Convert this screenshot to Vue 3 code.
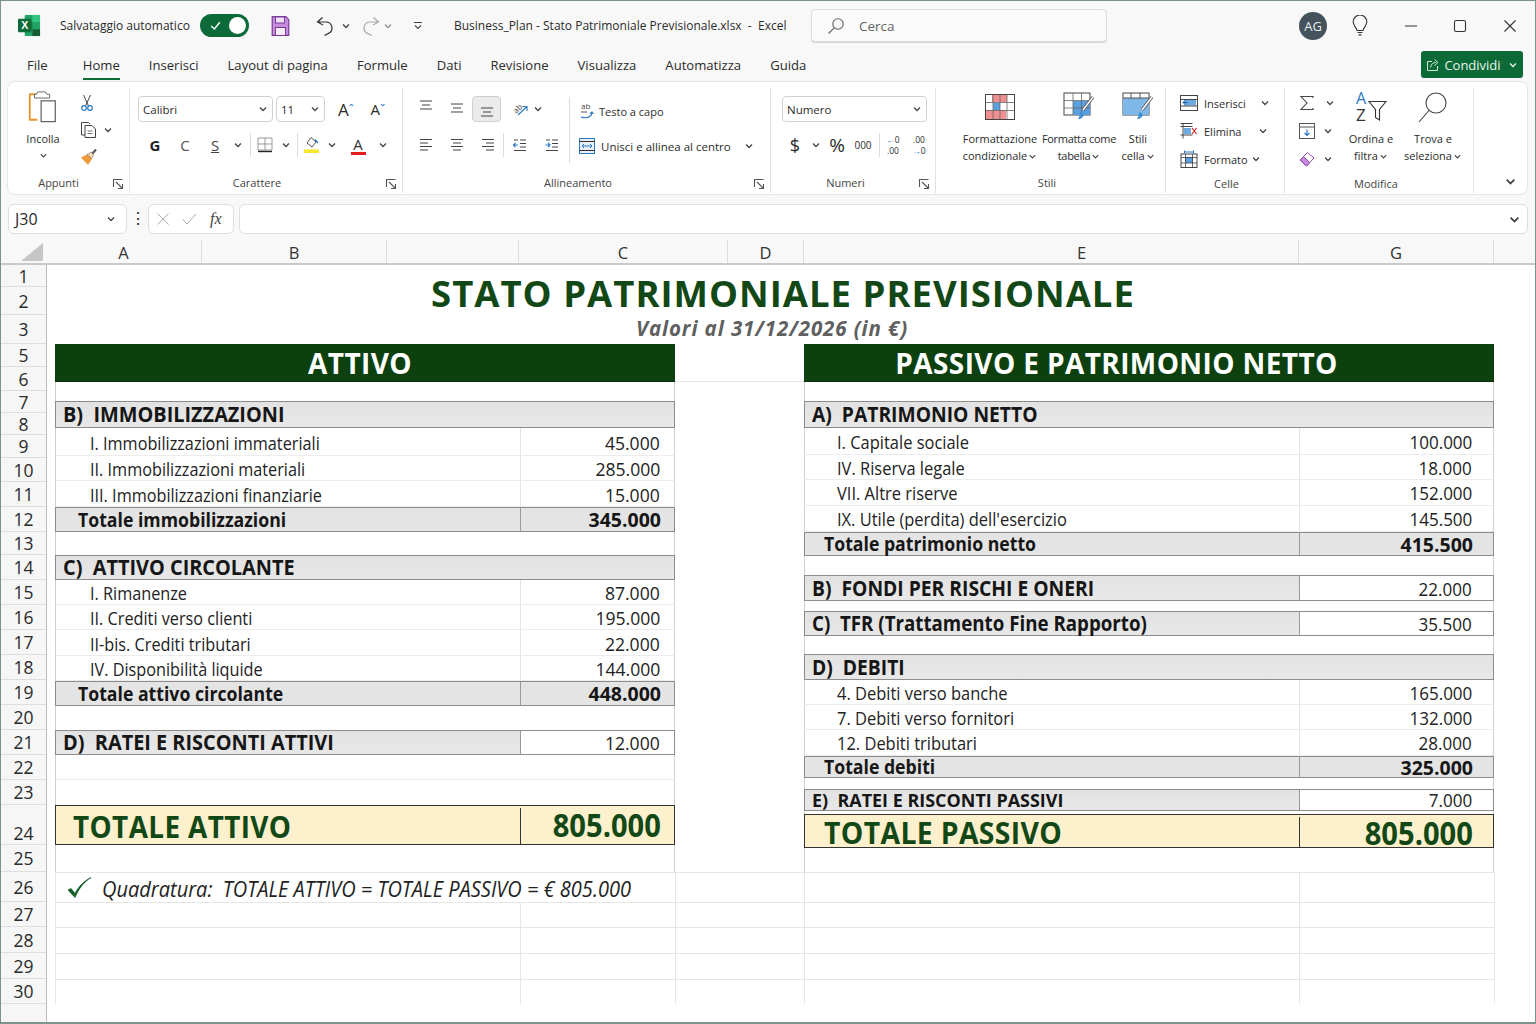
<template>
  <div class="app">
    <!-- icone ripetute -->
    <svg class="sprite" width="0" height="0">
      <symbol id="chev" viewBox="0 0 10 10"><path d="M2 3.5 5 6.5 8 3.5" fill="none" stroke="currentColor" stroke-width="1.3" /></symbol>
      <symbol id="launch" viewBox="0 0 12 12"><path d="M1.5 9V1.5H10.500M4 4l6 6M10.500 6v4.500H6" fill="none" stroke="#555" stroke-width="1.100" /></symbol>
      <symbol id="lines" viewBox="0 0 16 16"><path d="M2 3h12M4 7h8M2 11h12" fill="none" stroke="#444" stroke-width="1.100" /></symbol>
      <symbol id="left" viewBox="0 0 16 16"><path d="M2 2.500h12M2 6h8M2 9.500h12M2 13h8" fill="none" stroke="#444" stroke-width="1.100" /></symbol>
      <symbol id="center" viewBox="0 0 16 16"><path d="M2 2.500h12M4 6h8M2 9.500h12M4 13h8" fill="none" stroke="#444" stroke-width="1.100" /></symbol>
      <symbol id="right" viewBox="0 0 16 16"><path d="M2 2.500h12M6 6h8M2 9.500h12M6 13h8" fill="none" stroke="#444" stroke-width="1.100" /></symbol>
    </svg>

    <!-- barra del titolo -->
    <header class="titlebar">
      <svg class="logo" viewBox="0 0 24 24" width="23" height="23">
        <rect x="7" y="1" width="16" height="22" rx="1" fill="#21a366" />
        <rect x="15" y="1" width="8" height="7.500" fill="#33c481" />
        <rect x="7" y="8.500" width="8" height="7.500" fill="#107c41" />
        <rect x="15" y="16" width="8" height="7" fill="#185c37" />
        <rect x="0" y="5" width="14" height="14" rx="1" fill="#0f6b38" />
        <text x="7" y="16" text-anchor="middle" class="logo-x">X</text>
      </svg>
      <span class="autosave">Salvataggio automatico</span>
      <span class="toggle">
        <svg viewBox="0 0 12 12" width="13" height="13"><path d="M2 6.500 5 9.200 10 3" fill="none" stroke="#fff" stroke-width="1.300" /></svg>
        <i class="knob"></i>
      </span>
      <svg class="save" viewBox="0 0 18 20" width="19" height="20">
        <path d="M.7.7h13.600l3 3v15.600H.7z" fill="#c58bdc" stroke="#7a3c98" stroke-width="1.200" />
        <rect x="4" y="1" width="9" height="6" fill="#efe0f5" stroke="#7a3c98" />
        <rect x="4" y="11.500" width="10" height="8" fill="#f5ecf8" stroke="#7a3c98" />
      </svg>
      <svg class="undo" viewBox="0 0 18 20" width="18" height="20"><path d="M6.500 1.500 1.500 6l5.500 3M2 6h7.500a6 6 0 0 1 3 11.400L8.500 19.500" fill="none" stroke="#333" stroke-width="1.200" /></svg>
      <svg class="chev qa1"><use href="#chev" /></svg>
      <svg class="redo" viewBox="0 0 18 20" width="18" height="20"><path d="M11.500 1.500 16.500 6 11 9M16 6H8.500a6 6 0 0 0-3 11.400l4 2.100" fill="none" stroke="#a9a9a9" stroke-width="1.200" /></svg>
      <svg class="chev qa2"><use href="#chev" /></svg>
      <svg class="qat" viewBox="0 0 10 10" width="10" height="10"><path d="M1 1.500h8M2 4.500l3 3 3-3" fill="none" stroke="#444" stroke-width="1.100" /></svg>
      <span class="doc">Business_Plan - Stato Patrimoniale Previsionale.xlsx &nbsp;-&nbsp; Excel</span>
      <div class="search">
        <svg viewBox="0 0 18 18" width="18" height="18"><circle cx="11" cy="7" r="5.200" fill="none" stroke="#666" stroke-width="1.100" /><path d="M7.200 10.800 1.500 16.500" stroke="#666" stroke-width="1.100" /></svg>
        <span>Cerca</span>
      </div>
      <span class="avatar">AG</span>
      <svg class="bulb" viewBox="0 0 16 22" width="16" height="22"><path d="M5 15.500C4.500 12.500 1.200 11 1.200 6.800a6.800 6.800 0 0 1 13.600 0c0 4.200-3.300 5.700-3.800 8.700z" fill="none" stroke="#333" stroke-width="1.100" /><path d="M5.500 17.500h5M6.500 19.800h3" stroke="#333" stroke-width="1.200" /></svg>
      <svg class="win w-min" viewBox="0 0 14 14" width="14" height="14"><path d="M1 7h12" stroke="#333" /></svg>
      <svg class="win w-max" viewBox="0 0 14 14" width="14" height="14"><rect x="1.500" y="1.500" width="11" height="11" rx="1.500" fill="none" stroke="#333" stroke-width="1.100" /></svg>
      <svg class="win w-close" viewBox="0 0 14 14" width="14" height="14"><path d="M1.500 1.500l11 11M12.500 1.500l-11 11" stroke="#333" stroke-width="1.100" /></svg>
    </header>

    <!-- schede -->
    <nav class="tabs">
      <a v-for="t in tabs" :key="t" class="tab" :class="{ on: t === 'Home' }">{{ t }}</a>
      <button class="share">
        <svg viewBox="0 0 14 14" width="14" height="14"><path d="M6 3.500H1.500v9h10V8M4.500 9.500C5 6 7 4.500 10 4.500M8.500 1.500 12 4.500 8.500 7.500" fill="none" stroke="#cfe6d8" stroke-width="1" /></svg>
        <span>Condividi</span>
        <svg class="chev"><use href="#chev" /></svg>
      </button>
    </nav>

    <!-- barra multifunzione -->
    <section class="ribbon">
      <div class="grp g-app">
        <div class="grp-body">
          <div class="big paste">
            <svg viewBox="0 0 32 36" width="32" height="36">
              <path d="M12 4.500H2v27h8" fill="none" stroke="#e8952f" stroke-width="2" />
              <path d="M9 4.500l1.500-2.500h8l1.500 2.500h3v4H7v-4z" fill="#fff" stroke="#666" />
              <rect x="14" y="11.500" width="15" height="22" fill="#fff" stroke="#555" stroke-width="1.200" />
            </svg>
            <span>Incolla</span>
            <svg class="chev"><use href="#chev" /></svg>
          </div>
          <div class="app-tools">
            <svg viewBox="0 0 14 18" width="14" height="18"><path d="M3.500 1 8.500 12M10.500 1 5.500 12" stroke="#444" fill="none" /><circle cx="4" cy="14" r="2.300" fill="none" stroke="#2b78c2" stroke-width="1.200" /><circle cx="10" cy="14" r="2.300" fill="none" stroke="#2b78c2" stroke-width="1.200" /></svg>
            <div class="tool-row">
              <svg viewBox="0 0 17 18" width="17" height="18"><path d="M5 14H1.500V1.500h7L10 3" fill="#fff" stroke="#444" /><path d="M5 4.500h7l3.500 3.500v8.500H5z" fill="#fff" stroke="#444" /><path d="M7.500 10h5M7.500 12.500h5" stroke="#777" /></svg>
              <svg class="chev"><use href="#chev" /></svg>
            </div>
            <svg viewBox="0 0 18 18" width="18" height="18"><path d="M1 9.500 8 6l4 5-4 6z" fill="#ee9a3a" /><path d="M7 6.500 11.500 4l2 3-2 3.500z" fill="#f7d9ae" stroke="#666" stroke-width=".6" /><path d="M12.500 5.500 16 1.500" stroke="#555" stroke-width="2" /></svg>
          </div>
        </div>
        <div class="grp-label">Appunti<svg class="launch"><use href="#launch" /></svg></div>
      </div>

      <div class="grp g-font">
        <div class="grp-body col">
          <div class="row">
            <div class="combo w135">Calibri<svg class="chev"><use href="#chev" /></svg></div>
            <div class="combo w49">11<svg class="chev"><use href="#chev" /></svg></div>
            <span class="cell w30 ml6 glyph">A<sup class="up">ˆ</sup></span>
            <span class="cell w30 ml2 glyph small-a">A<sup class="up">ˇ</sup></span>
          </div>
          <div class="row r2">
            <b class="cell w30 fmt">G</b>
            <span class="cell w30 fmt thin">C</span>
            <span class="cell w30 fmt under">S</span>
            <span class="cell w16"><svg class="chev"><use href="#chev" /></svg></span>
            <i class="sep ml4"></i>
            <span class="cell w28">
              <svg viewBox="0 0 16 16" width="16" height="16"><path d="M1 1h14v12H1zM8 1v12M1 7h14" fill="none" stroke="#999" /><path d="M1 14.500h14" stroke="#222" stroke-width="1.400" /></svg>
            </span>
            <span class="cell w14"><svg class="chev"><use href="#chev" /></svg></span>
            <i class="sep ml4"></i>
            <span class="cell w28">
              <svg viewBox="0 0 16 18" width="16" height="18"><path d="M3 7 7 1.500 12 6 8 11z" fill="#fff" stroke="#555" /><path d="M11 3.500 14 7" stroke="#2b78c2" stroke-width="1.400" /><rect y="13.500" width="15" height="3.500" fill="#f7e72a" /></svg>
            </span>
            <span class="cell w12"><svg class="chev"><use href="#chev" /></svg></span>
            <span class="cell w28 ml6 color-a">A<i></i></span>
            <span class="cell w16 ml3"><svg class="chev"><use href="#chev" /></svg></span>
          </div>
        </div>
        <div class="grp-label">Carattere<svg class="launch"><use href="#launch" /></svg></div>
      </div>

      <div class="grp g-align">
        <div class="grp-body">
          <div class="align-left">
            <div class="row">
              <span class="cell w31"><svg class="ic16 t-up"><use href="#lines" /></svg></span>
              <span class="cell w31"><svg class="ic16"><use href="#lines" /></svg></span>
              <span class="cell w29 pressed"><svg class="ic16 t-down"><use href="#lines" /></svg></span>
              <span class="cell w24 ml7">
                <svg class="free" viewBox="0 0 18 18" width="18" height="18"><text x="2" y="12" class="orient" transform="rotate(-45 6 9)">ab</text><path d="M7 15 15.500 7M11.500 6.500H16V11" fill="none" stroke="#2b78c2" stroke-width="1.100" /></svg>
              </span>
              <span class="cell w12"><svg class="chev"><use href="#chev" /></svg></span>
            </div>
            <div class="row r2">
              <span class="cell w31"><svg class="ic16"><use href="#left" /></svg></span>
              <span class="cell w31"><svg class="ic16"><use href="#center" /></svg></span>
              <span class="cell w31"><svg class="ic16"><use href="#right" /></svg></span>
              <i class="sep"></i>
              <span class="cell w32">
                <svg viewBox="0 0 16 16" width="16" height="16"><path d="M8 3h6M8 6.500h6M8 10h6M2 13.500h12M2 3h4" fill="none" stroke="#444" stroke-width="1.100" /><path d="M6 8H1.500M3.500 6 1.500 8l2 2" fill="none" stroke="#2b78c2" stroke-width="1.200" /></svg>
              </span>
              <span class="cell w31">
                <svg viewBox="0 0 16 16" width="16" height="16"><path d="M8 3h6M8 6.500h6M8 10h6M2 13.500h12M2 3h4" fill="none" stroke="#444" stroke-width="1.100" /><path d="M1.500 8H6M4 6l2 2-2 2" fill="none" stroke="#2b78c2" stroke-width="1.200" /></svg>
              </span>
            </div>
          </div>
          <i class="sep tall"></i>
          <div class="align-right">
            <div class="wrap-row">
              <svg class="free" viewBox="0 0 16 18" width="16" height="18"><text x="2" y="7" class="orient">ab</text><path d="M2 10h6" stroke="#555" /><path d="M2 15c5 2 11 0 11-5M11 11.500l2-1.500 1.500 2" fill="none" stroke="#2b78c2" stroke-width="1.100" /></svg>
              <span>Testo a capo</span>
            </div>
            <div class="merge-row">
              <svg viewBox="0 0 16 16" width="16" height="16"><rect x=".5" y=".5" width="15" height="15" fill="#e8f1fa" stroke="#2b78c2" /><path d="M0 3.500h16M0 12.500h16" stroke="#333" /><path d="M3 8h10M5 6 3 8l2 2M11 6l2 2-2 2" fill="none" stroke="#2b78c2" /></svg>
              <span>Unisci e allinea al centro</span>
              <svg class="chev"><use href="#chev" /></svg>
            </div>
          </div>
        </div>
        <div class="grp-label">Allineamento<svg class="launch"><use href="#launch" /></svg></div>
      </div>

      <div class="grp g-num">
        <div class="grp-body col">
          <div class="row"><div class="combo w145">Numero<svg class="chev"><use href="#chev" /></svg></div></div>
          <div class="row r2 num-row">
            <span class="cell w26 cur">$</span>
            <span class="cell w16"><svg class="chev"><use href="#chev" /></svg></span>
            <span class="cell w26 cur pct">%</span>
            <span class="cell w26 thou">000</span>
            <i class="sep ml3"></i>
            <span class="cell w26 dec"><span><b class="blue">←</b>0</span><span>.00</span></span>
            <span class="cell w26 dec"><span>.00</span><span><b class="blue">→</b>0</span></span>
          </div>
        </div>
        <div class="grp-label">Numeri<svg class="launch"><use href="#launch" /></svg></div>
      </div>

      <div class="grp g-styles">
        <div class="grp-body">
          <div class="big w78">
            <svg viewBox="0 0 30 26" width="30" height="25">
              <rect x=".5" y=".5" width="29" height="25" fill="#fff" stroke="#444" />
              <rect x="7" y="1" width="15" height="7" fill="#f08f8f" />
              <rect x="1" y="16" width="20" height="9" fill="#f08f8f" />
              <rect x="8" y="9" width="7" height="7" fill="#5aa0dc" />
              <path d="M1 8.500h28M1 16.500h28M8 1v24M15 1v24M22 1v24" stroke="#666" fill="none" stroke-width=".8" />
            </svg>
            <span>Formattazione</span>
            <span>condizionale<svg class="chev"><use href="#chev" /></svg></span>
          </div>
          <div class="big w72">
            <svg viewBox="0 0 32 30" width="32" height="30">
              <rect x="1" y="1" width="26" height="22" fill="#fff" stroke="#444" />
              <rect x="10" y="9" width="17" height="14" fill="#5a9fdf" />
              <path d="M1 8.500h26M1 16h26M10 1v22M18.500 1v22" stroke="#666" stroke-width=".8" fill="none" />
              <path d="M20 18 30 5" stroke="#555" stroke-width="3" />
              <path d="M20 18 30 5" stroke="#fff" stroke-width="1.500" />
              <path d="M15 27c3 0 6-2 5.500-5L18 20c-2 2-1 5-3 7z" fill="#3d8fd8" />
            </svg>
            <span>Formatta come</span>
            <span>tabella<svg class="chev"><use href="#chev" /></svg></span>
          </div>
          <div class="big w44">
            <svg viewBox="0 0 32 30" width="32" height="30">
              <rect x="1" y="1" width="26" height="22" fill="#fff" stroke="#444" />
              <rect x="1" y="6" width="26" height="17" fill="#7fb7e8" />
              <path d="M1 6h26M9 1v5M18 1v5" stroke="#555" fill="none" />
              <path d="M20 18 30 5" stroke="#555" stroke-width="3" />
              <path d="M20 18 30 5" stroke="#fff" stroke-width="1.500" />
              <path d="M15 27c3 0 6-2 5.500-5L18 20c-2 2-1 5-3 7z" fill="#3d8fd8" />
            </svg>
            <span>Stili</span>
            <span>cella<svg class="chev"><use href="#chev" /></svg></span>
          </div>
        </div>
        <div class="grp-label">Stili</div>
      </div>

      <div class="grp g-cells">
        <div class="grp-body col">
          <div class="cell-row">
            <svg viewBox="0 0 18 16" width="18" height="16"><rect x=".5" y=".5" width="17" height="15" fill="#fff" stroke="#444" /><rect x="4" y="4.500" width="12" height="6" fill="#6daae2" /><path d="M1 4.500h16M1 11h16" stroke="#444" /><path d="M8 7.500H3M5 5.500l-2 2 2 2" stroke="#1a5fa8" fill="none" /></svg>
            <span class="t-ins">Inserisci</span><svg class="chev"><use href="#chev" /></svg>
          </div>
          <div class="cell-row">
            <svg viewBox="0 0 18 16" width="18" height="16"><path d="M.5 3.500h12M.5 12h12M3 .5V15.500M.5.500h12" fill="none" stroke="#444" /><rect x="4" y="5" width="7" height="6" fill="#6daae2" /><path d="M12 5l4.500 6M16.500 5 12 11" stroke="#e02020" stroke-width="1.200" /></svg>
            <span class="t-eli">Elimina</span><svg class="chev"><use href="#chev" /></svg>
          </div>
          <div class="cell-row">
            <svg viewBox="0 0 18 18" width="18" height="18"><rect x="1" y="4" width="16" height="13.500" fill="#fff" stroke="#444" /><rect x="5" y="7" width="8" height="6" fill="#5a9fdf" /><path d="M1 7.500h16M1 13h16M5.500 4v13.500M12.500 4v13.500" stroke="#444" fill="none" stroke-width=".8" /><path d="M4.500 .5v3M13.500 .5v3M4.500 2h9" stroke="#2b78c2" /></svg>
            <span class="t-fmt">Formato</span><svg class="chev"><use href="#chev" /></svg>
          </div>
        </div>
        <div class="grp-label lab2">Celle</div>
      </div>

      <div class="grp g-edit">
        <div class="grp-body">
          <div class="edit-tools">
            <div class="cell-row s1">
              <svg viewBox="0 0 16 16" width="16" height="16"><path d="M14 3V1.500H2L8 8l-6 6.500h12V13" fill="none" stroke="#444" stroke-width="1.100" /></svg>
              <svg class="chev"><use href="#chev" /></svg>
            </div>
            <div class="cell-row s2">
              <svg viewBox="0 0 16 16" width="16" height="16"><rect x=".5" y=".5" width="15" height="15" fill="#fff" stroke="#555" /><path d="M1 4h14" stroke="#555" /><path d="M8 6.500v6M5.500 10 8 12.500 10.500 10" fill="none" stroke="#2b78c2" stroke-width="1.200" /></svg>
              <svg class="chev"><use href="#chev" /></svg>
            </div>
            <div class="cell-row s3">
              <svg viewBox="0 0 16 16" width="16" height="16"><path d="M1 9 8.500 1.500 15 7 7.500 15z" fill="#fff" stroke="#8a4cb0" /><path d="M1 9l3.500-3.500L10.800 11.700 7.500 15z" fill="#c58bdc" stroke="#8a4cb0" /></svg>
              <svg class="chev"><use href="#chev" /></svg>
            </div>
          </div>
          <div class="big w56">
            <svg class="az" viewBox="0 0 32 34" width="32" height="34">
              <text x="1" y="14" class="az-a">A</text>
              <text x="1" y="31" class="az-z">Z</text>
              <path d="M14 11.500h17l-6.500 8v10.500l-4-2.500v-8z" fill="#fff" stroke="#333" stroke-width="1.100" />
            </svg>
            <span>Ordina e</span>
            <span>filtra<svg class="chev"><use href="#chev" /></svg></span>
          </div>
          <div class="big w68">
            <svg viewBox="0 0 32 32" width="32" height="32"><circle cx="19" cy="12" r="10" fill="#fff" stroke="#444" stroke-width="1.100" /><path d="M12 19.500 2 31" stroke="#444" stroke-width="1.100" /></svg>
            <span>Trova e</span>
            <span>seleziona<svg class="chev"><use href="#chev" /></svg></span>
          </div>
        </div>
        <div class="grp-label lab2">Modifica</div>
      </div>

      <div class="collapse"><svg class="chev"><use href="#chev" /></svg></div>
    </section>

    <!-- barra della formula -->
    <div class="formula">
      <div class="namebox">J30<svg class="chev"><use href="#chev" /></svg></div>
      <span class="dots">⋮</span>
      <div class="fxbox">
        <svg viewBox="0 0 14 14" width="14" height="14"><path d="M1.500 1.500l11 11M12.500 1.500l-11 11" stroke="#aaa" /></svg>
        <svg viewBox="0 0 16 14" width="16" height="14"><path d="M1.500 7.500 6 12 15 2" fill="none" stroke="#aaa" /></svg>
        <em>fx</em>
      </div>
      <div class="fxinput"><svg class="chev"><use href="#chev" /></svg></div>
    </div>

    <!-- intestazioni di colonna -->
    <div class="colhead">
      <div class="corner"><i></i></div>
      <div v-for="c in columns" :key="c.w + c.t" class="colcell" :style="{ width: c.w + 'px', paddingLeft: (c.p || 0) + 'px' }">{{ c.t }}</div>
    </div>

    <!-- foglio -->
    <div class="sheet">
      <div class="rownums">
        <div v-for="r in rowNums" :key="r.n" class="rownum" :class="{ low: r.n === 24 }" :style="{ height: r.h + 'px' }">{{ r.n }}</div>
      </div>
      <div class="canvas">
        <div class="heading">
          <h1>STATO PATRIMONIALE PREVISIONALE</h1>
          <h2>Valori al 31/12/2026 (in €)</h2>
        </div>
        <div class="tables">
          <div class="tbl left">
            <div class="thead">ATTIVO</div>
            <div v-for="(r, i) in leftRows" :key="i" class="trow" :class="r.k" :style="{ height: r.h + 'px' }">
              <div class="lab"><span class="tx">{{ r.t }}</span></div>
              <div v-if="r.v" class="val"><span class="tx">{{ r.v }}</span></div>
            </div>
          </div>
          <div class="mid"><i></i></div>
          <div class="tbl right">
            <div class="thead">PASSIVO E PATRIMONIO NETTO</div>
            <div v-for="(r, i) in rightRows" :key="i" class="trow" :class="r.k" :style="{ height: r.h + 'px' }">
              <div class="lab"><span class="tx">{{ r.t }}</span></div>
              <div v-if="r.v" class="val"><span class="tx">{{ r.v }}</span></div>
            </div>
          </div>
        </div>
        <div class="grid-rows">
          <div class="grow check-row">
            <div class="gc first wide">
              <svg viewBox="0 0 26 24" width="26" height="24"><path d="M2 14 9 21.500C13 12 18 6 25 1.500 18 5 13 10 9 17.500L5 12.500z" fill="#12602a" stroke="#12602a" stroke-width=".8" /></svg>
              <span>Quadratura:&nbsp; TOTALE ATTIVO = TOTALE PASSIVO = € 805.000</span>
            </div>
            <div class="gc col-d"></div>
            <div class="gc col-e"></div>
            <div class="gc col-g"></div>
          </div>
          <div v-for="(h, i) in [25, 26, 26, 25]" :key="i" class="grow" :style="{ height: h + 'px' }">
            <div class="gc first col-b"></div>
            <div class="gc col-c"></div>
            <div class="gc col-d"></div>
            <div class="gc col-e"></div>
            <div class="gc col-g"></div>
          </div>
        </div>
      </div>
    </div>
  </div>
</template>

<script setup>
const tabs = ['File', 'Home', 'Inserisci', 'Layout di pagina', 'Formule', 'Dati', 'Revisione', 'Visualizza', 'Automatizza', 'Guida']

const columns = [
  { t: 'A', w: 156 },
  { t: 'B', w: 185 },
  { t: '', w: 132 },
  { t: 'C', w: 209 },
  { t: 'D', w: 76 },
  { t: 'E', w: 495, p: 61 },
  { t: 'G', w: 195 }
]

const rowHeights = { 1: 22, 2: 28, 3: 29, 5: 23, 6: 24, 7: 22, 8: 22, 9: 23, 10: 24, 11: 25, 12: 25, 13: 23, 14: 25, 15: 25, 16: 25, 17: 25, 18: 25, 19: 25, 20: 25, 21: 25, 22: 25, 23: 25, 24: 40, 25: 27, 26: 30, 27: 25, 28: 26, 29: 26, 30: 25 }
const rowNums = Object.keys(rowHeights).map((n) => ({ n: Number(n), h: rowHeights[n] }))

const leftRows = [
  { k: 'blank', h: 19 },
  { k: 'sec', h: 27, t: 'B)  IMMOBILIZZAZIONI' },
  { k: 'item', h: 28, t: 'I. Immobilizzazioni immateriali', v: '45.000' },
  { k: 'item', h: 25, t: 'II. Immobilizzazioni materiali', v: '285.000' },
  { k: 'item', h: 26, t: 'III. Immobilizzazioni finanziarie', v: '15.000' },
  { k: 'tot', h: 25, t: 'Totale immobilizzazioni', v: '345.000' },
  { k: 'blank', h: 23 },
  { k: 'sec', h: 25, t: 'C)  ATTIVO CIRCOLANTE' },
  { k: 'item', h: 25, t: 'I. Rimanenze', v: '87.000' },
  { k: 'item', h: 25, t: 'II. Crediti verso clienti', v: '195.000' },
  { k: 'item', h: 26, t: 'II-bis. Crediti tributari', v: '22.000' },
  { k: 'item', h: 25, t: 'IV. Disponibilità liquide', v: '144.000' },
  { k: 'tot', h: 25, t: 'Totale attivo circolante', v: '448.000' },
  { k: 'blank', h: 24 },
  { k: 'sec', h: 25, t: 'D)  RATEI E RISCONTI ATTIVI', v: '12.000' },
  { k: 'blank line', h: 25 },
  { k: 'blank', h: 25 },
  { k: 'grand', h: 40, t: 'TOTALE ATTIVO', v: '805.000' },
  { k: 'blank', h: 27 }
]

const rightRows = [
  { k: 'blank', h: 19 },
  { k: 'sec', h: 27, t: 'A)  PATRIMONIO NETTO' },
  { k: 'item', h: 27, t: 'I. Capitale sociale', v: '100.000' },
  { k: 'item', h: 25, t: 'IV. Riserva legale', v: '18.000' },
  { k: 'item', h: 26, t: 'VII. Altre riserve', v: '152.000' },
  { k: 'item', h: 26, t: "IX. Utile (perdita) dell'esercizio", v: '145.500' },
  { k: 'tot', h: 24, t: 'Totale patrimonio netto', v: '415.500' },
  { k: 'blank', h: 19 },
  { k: 'sec', h: 26, t: 'B)  FONDI PER RISCHI E ONERI', v: '22.000' },
  { k: 'blank', h: 10 },
  { k: 'sec narrow', h: 25, t: 'C)  TFR (Trattamento Fine Rapporto)', v: '35.500' },
  { k: 'blank', h: 18 },
  { k: 'sec', h: 26, t: 'D)  DEBITI' },
  { k: 'item', h: 25, t: '4. Debiti verso banche', v: '165.000' },
  { k: 'item', h: 25, t: '7. Debiti verso fornitori', v: '132.000' },
  { k: 'item', h: 26, t: '12. Debiti tributari', v: '28.000' },
  { k: 'tot', h: 22, t: 'Totale debiti', v: '325.000' },
  { k: 'blank', h: 11 },
  { k: 'sec small', h: 22, t: 'E)  RATEI E RISCONTI PASSIVI', v: '7.000' },
  { k: 'blank', h: 3 },
  { k: 'grand', h: 34, t: 'TOTALE PASSIVO', v: '805.000' },
  { k: 'blank', h: 24 }
]
</script>

<style scoped>
.app {
  width: 1536px;
  height: 1024px;
  box-sizing: border-box;
  background: #f8f8f8;
  border: 1px solid #7d928b;
  border-width: 1px 1px 2px 1px;
  font-family: "Open Sans", "Noto Sans", sans-serif;
  color: #2b2b2b;
  overflow: hidden;
}
.sprite { position: absolute; }
.chev { width: 10px; height: 10px; color: #444; flex: none; }
.free { overflow: visible; flex: none; }

/* barra del titolo */
.titlebar { height: 47px; box-sizing: border-box; padding-top: 2px; display: flex; align-items: center; font-size: 12px; }
.logo { margin-left: 17px; flex: none; }
.logo-x { font: bold 11px "Liberation Sans", sans-serif; fill: #fff; }
.autosave { margin-left: 19px; width: 140px; white-space: nowrap; }
.toggle { width: 49px; height: 23px; border-radius: 12px; background: #0b6a38; display: flex; align-items: center; justify-content: space-between; padding: 0 3px 0 9px; box-sizing: border-box; flex: none; }
.knob { width: 17px; height: 17px; border-radius: 50%; background: #fff; }
.save { margin-left: 22px; flex: none; }
.undo { margin-left: 26px; flex: none; }
.qa1 { margin-left: 7px; }
.redo { margin-left: 11px; flex: none; }
.qa2 { margin-left: 3px; opacity: .55; }
.qat { margin-left: 20px; flex: none; }
.doc { margin-left: 31px; width: 357px; white-space: nowrap; flex: none; }
.search { width: 296px; height: 33px; box-sizing: border-box; border: 1px solid #dcdcdc; border-radius: 4px; background: #fafafa; display: flex; align-items: center; padding-left: 15px; gap: 14px; color: #666; font-size: 13.5px; box-shadow: 0 1px 0 #d5d5d5; flex: none; }
.avatar { margin-left: 192px; width: 28px; height: 28px; border-radius: 50%; background: #44525c; color: #e9eef0; font-size: 13px; display: flex; align-items: center; justify-content: center; flex: none; }
.bulb { margin-left: 25px; flex: none; }
.win { flex: none; }
.w-min { margin-left: 36px; }
.w-max { margin-left: 35px; }
.w-close { margin-left: 36px; }

/* schede */
.tabs { height: 33px; box-sizing: border-box; padding: 2px 0 0 26px; display: flex; align-items: center; font-size: 13.1px; position: relative; gap: 29px; }
.tab { padding: 5px 0 4px; border-bottom: 2px solid transparent; white-space: nowrap; }
.tab.on { border-bottom-color: #0f6b38; font-weight: 500; }
.tab:first-child { margin-right: 6px; }
.share { position: absolute; right: 12px; top: 3px; width: 102px; height: 27px; background: #0c6a36; color: #eaf4ee; border: none; border-radius: 3px; display: flex; align-items: center; justify-content: center; gap: 4px; font: inherit; padding: 0; font-size: 13px; }
.share .chev { color: #eaf4ee; margin-left: 3px; }

/* barra multifunzione */
.ribbon { margin: 0 7px 0 6px; height: 114px; background: #fff; border: 1px solid #e6e6e6; border-radius: 8px; box-sizing: border-box; display: flex; font-size: 11px; }
.grp { display: flex; flex-direction: column; border-right: 1px solid #e2e2e2; margin: 6px 0 1px; box-sizing: border-box; flex: none; }
.grp-body { flex: 1; display: flex; min-height: 0; }
.grp-body.col { flex-direction: column; }
.grp-label { height: 20px; position: relative; text-align: center; color: #444; line-height: 20px; }
.lab2 { top: 1px; }
.launch { width: 12px; height: 12px; position: absolute; right: 5px; top: 5px; }
.g-app { width: 122px; }
.g-font { width: 273px; padding-left: 8px; }
.g-align { width: 368px; padding-left: 7px; }
.g-num { width: 165px; padding-left: 11px; }
.g-styles { width: 230px; padding-left: 25px; }
.g-cells { width: 119px; padding-left: 14px; }
.g-edit { width: 189px; padding-left: 14px; }
.g-app .grp-label { padding-right: 20px; }
.g-font .grp-label { padding-right: 26px; }
.g-align .grp-label { padding-right: 24px; }
.g-num .grp-label { padding-right: 26px; }
.g-styles .grp-label { padding-right: 32px; }
.g-cells .grp-label { padding-right: 11px; }
.g-edit .grp-label { padding-right: 20px; }
.big { display: flex; flex-direction: column; align-items: center; line-height: 17px; flex: none; white-space: nowrap; text-align: center; }
.big > svg:first-child { height: 34px; margin-top: 2px; margin-bottom: 6px; flex: none; overflow: visible; }
.big .chev { width: 9px; height: 9px; vertical-align: -1px; margin-left: 1px; }
.paste { width: 60px; margin-left: 5px; }
.paste > svg:first-child { margin-top: 2px; margin-bottom: 6px; }
.paste .chev { margin-top: 4px; }
.app-tools { margin-left: 7px; display: flex; flex-direction: column; align-items: flex-start; padding-top: 6px; gap: 9px; }
.tool-row { display: flex; align-items: center; gap: 6px; }
.row { display: flex; align-items: center; height: 26px; margin-top: 8px; flex: none; }
.row.r2 { margin-top: 10px; }
.g-font .r2 { margin-left: 2px; }
.cell { display: flex; align-items: center; justify-content: center; height: 26px; flex: none; }
.w12 { width: 12px; } .w14 { width: 14px; } .w16 { width: 16px; } .w24 { width: 24px; } .w26 { width: 26px; } .w28 { width: 28px; }
.w29 { width: 29px; } .w30 { width: 30px; } .w31 { width: 31px; } .w32 { width: 32px; }
.w44 { width: 44px; } .w56 { width: 56px; } .w68 { width: 68px; } .w72 { width: 72px; letter-spacing: -.3px; } .w78 { width: 78px; }
.ml2 { margin-left: 2px; } .ml3 { margin-left: 3px; } .ml4 { margin-left: 4px; } .ml6 { margin-left: 6px; } .ml7 { margin-left: 7px; }
.combo { height: 26px; box-sizing: border-box; border: 1px solid #d2d2d2; border-radius: 4px; display: flex; align-items: center; justify-content: space-between; padding: 0 4px; flex: none; background: #fff; font-size: 11.5px; }
.w135 { width: 135px; margin-right: 3px; } .w49 { width: 49px; } .w145 { width: 145px; }
.glyph { font-size: 17px; position: relative; }
.glyph sup { font-size: 13px; color: #2b78c2; line-height: 0; position: relative; top: 0; }
.small-a { font-size: 15px; }
.fmt { font-size: 15px; color: #222; }
.thin { color: #555; }
.under { text-decoration: underline; color: #444; }
.sep { width: 1px; height: 24px; background: #dcdcdc; flex: none; display: block; }
.sep.tall { height: 66px; margin: 9px 0 0 0; }
.color-a { flex-direction: column; font-size: 15px; line-height: 16px; color: #333; }
.color-a i { display: block; width: 15px; height: 3px; background: #e51c1c; }
.ic16 { width: 16px; height: 16px; }
.t-up { margin-top: -7px; }
.t-down { margin-top: 7px; }
.pressed { background: #ebebeb; border: 1px solid #cfcfcf; border-radius: 4px; box-sizing: border-box; }
.orient { font: 8px "Open Sans", sans-serif; fill: #444; }
.align-left { width: 159px; }
.align-right { margin-left: 9px; }
.wrap-row, .merge-row { display: flex; align-items: center; gap: 4px; height: 26px; white-space: nowrap; }
.wrap-row { margin-top: 10px; }
.merge-row { margin-top: 9px; gap: 6px; font-size: 11.5px; }
.merge-row .chev { margin-left: 7px; }
.cur { font-size: 18px; }
.pct { font-size: 19px; }
.thou { font-size: 10px; }
.dec { font-size: 8.5px; line-height: 11px; flex-direction: column; }
.blue { color: #2b78c2; font-weight: 400; font-size: 8.5px; }
.w78 { margin-right: 4px; }
.w72 { margin-right: 1px; }
.cell-row { display: flex; align-items: center; height: 28px; }
.cell-row > svg:first-child { width: 18px; margin-right: 6px; flex: none; }
.g-cells .col { padding-top: 1px; }
.t-ins { width: 56px; } .t-eli { width: 54px; } .t-fmt { width: 47px; }
.edit-tools { width: 44px; padding-top: 1px; }
.edit-tools .cell-row > svg:first-child { width: 16px; margin-right: 10px; }
.s2 > svg:first-child, .s3 > svg:first-child { margin-right: 8px !important; }
.az-a { font: 16px "Open Sans", sans-serif; fill: #2b78c2; }
.az-z { font: 17px "Open Sans", sans-serif; fill: #333; }
.collapse { flex: 1; display: flex; align-items: flex-end; justify-content: flex-end; padding: 0 10px 6px 0; }
.collapse .chev { width: 13px; height: 13px; }

/* barra della formula */
.formula { height: 30px; margin: 9px 7px 0 7px; display: flex; font-size: 16px; }
.namebox { width: 119px; box-sizing: border-box; border: 1px solid #dfdfdf; border-radius: 6px; background: #fff; display: flex; align-items: center; justify-content: space-between; padding: 0 10px 0 6px; }
.dots { width: 21px; text-align: center; line-height: 28px; }
.fxbox { width: 86px; box-sizing: border-box; border: 1px solid #dfdfdf; border-radius: 6px; background: #fff; display: flex; align-items: center; padding-left: 7px; gap: 11px; color: #444; }
.fxbox em { font: italic 16px "Liberation Serif", serif; margin-left: 2px; }
.fxinput { flex: 1; margin-left: 5px; box-sizing: border-box; border: 1px solid #dfdfdf; border-radius: 6px; background: #fff; display: flex; align-items: center; justify-content: flex-end; padding-right: 6px; }
.fxinput .chev { width: 13px; height: 13px; }

/* intestazioni */
.colhead { height: 25px; margin-top: 6px; display: flex; border-bottom: 2px solid #c9c9c9; box-sizing: border-box; font-size: 16.5px; color: #333; }
.corner { width: 45px; position: relative; flex: none; }
.corner i { position: absolute; right: 3px; bottom: 2px; width: 0; height: 0; border-style: solid; border-width: 0 0 18px 22px; border-color: transparent transparent #c6c6c6 transparent; }
.colcell { box-sizing: border-box; text-align: center; border-right: 1px solid #dcdcdc; line-height: 25px; flex: none; }

/* foglio */
.sheet { display: flex; background: #fff; height: 759px; }
.rownums { width: 45px; flex: none; background: #f6f6f6; border-right: 1px solid #bcbcbc; box-sizing: content-box; }
.rownum { box-sizing: border-box; border-bottom: 1px solid #dedede; text-align: center; font-size: 17.5px; line-height: 1; display: flex; align-items: center; justify-content: center; color: #2a2a2a; padding-top: 2px; }
.rownum.low { align-items: flex-end; padding-bottom: 2px; }
.canvas { flex: 1; min-width: 0; }
.heading { height: 79px; padding-left: 12px; width: 1448px; box-sizing: content-box; text-align: center; overflow: hidden; }
h1 { margin: 7px 0 0; font-size: 36.500px; line-height: 42px; font-weight: 700; color: #124716; letter-spacing: 1px; white-space: nowrap; }
h2 { margin: 0; padding-right: 22px; font-size: 20.500px; line-height: 28px; font-weight: 700; font-style: italic; color: #606060; letter-spacing: .9px; }

.tables { display: flex; padding-left: 8px; height: 528px; }
.tbl { flex: none; }
.tbl.left { width: 620px; }
.tbl.right { width: 690px; }
.mid { width: 129px; flex: none; padding-top: 37px; }
.mid i { display: block; border-bottom: 1px solid #e6e6e6; }
.thead { height: 38px; background: #0c400f; color: #fff; font-weight: 700; font-size: 28px; line-height: 38px; text-align: center; white-space: pre; border-bottom: 1px solid #0a2e0b; box-sizing: border-box; letter-spacing: .4px; }
.left .thead { padding-right: 10px; }
.right .thead { padding-right: 65px; }

.trow { display: flex; box-sizing: border-box; align-items: stretch; white-space: pre; border-left: 1px solid #cfcfcf; border-right: 1px solid #cfcfcf; }
.lab { flex: 1; display: flex; align-items: center; min-width: 0; }
.val { flex: none; width: 154px; border-left: 1px solid #e4e4e4; box-sizing: border-box; display: flex; align-items: center; justify-content: flex-end; background: #fff; padding-right: 14px; }
.right .val { width: 194px; padding-right: 21px; }
/* il testo del foglio è più stretto di Open Sans */
.tx { display: inline-block; }
.lab .tx { transform-origin: 0 50%; }
.val .tx { transform-origin: 100% 50%; }
.left .val .tx { transform: scaleX(.95); }
.right .val .tx { transform: scaleX(.92); }

.item { font-size: 18.500px; color: #222; border-bottom: 1px solid #ececec; }
.left .item .lab { padding: 1px 0 0 34px; }
.right .item .lab { padding-left: 32px; }
.left .item .val { padding-top: 1px; }
.left .item .lab .tx { transform: scaleX(.878); }
.right .item .lab .tx { transform: scaleX(.89); }

.sec { background: linear-gradient(#e2e2e2, #e8e8e8); border: 1px solid #8c8c8c; font-weight: 700; font-size: 20.500px; color: #161616; }
.sec .lab { padding: 0 0 1px 7px; }
.sec .val { font-weight: 400; font-size: 18.500px; border-left-color: #999; color: #222; }
.left .sec .lab .tx { transform: scaleX(.97); }
.right .sec .lab .tx { transform: scaleX(.94); }
.right .narrow .lab .tx { transform: scaleX(.913); }
.small .lab { font-size: 18.500px; }
.right .small .lab .tx { transform: scaleX(.97); }
.small .val { padding-bottom: 2px; }

.tot { background: #e4e4e4; border: 1px solid #8c8c8c; font-weight: 700; font-size: 19px; color: #161616; }
.left .tot .lab { padding-left: 22px; }
.right .tot .lab { padding-left: 19px; }
.tot .lab .tx { transform: scaleX(.93); }
.tot .val { background: transparent; border-left-color: #999; padding-right: 13px; font-size: 19.500px; }
.right .tot .val { padding-right: 20px; }
.left .tot .val .tx, .right .tot .val .tx { transform: none; }

.grand { background: #fcf0cd; border: 1px solid #333; font-weight: 700; font-size: 30px; color: #124716; letter-spacing: .4px; padding-top: 2px; }
.left .grand .lab { padding-left: 17px; }
.right .grand .lab { padding-left: 19px; }
.left .grand .lab .tx { transform: scaleX(.93); }
.right .grand .lab .tx { transform: scaleX(.944); }
.grand .val { background: transparent; border-left-color: #333; padding-bottom: 3px; font-size: 32px; letter-spacing: 0; padding-right: 13px; }
.right .grand .val { padding: 0 20px 0 0; }
.left .grand .val .tx, .right .grand .val .tx { transform: scaleX(.91); }

.blank.line { border-bottom: 1px solid #e8e8e8; }

.grid-rows { padding-left: 8px; }
.grow { display: flex; width: 1440px; border-top: 1px solid #e6e6e6; box-sizing: border-box; }
.check-row { height: 30px; }
.gc { box-sizing: border-box; border-right: 1px solid #e6e6e6; flex: none; }
.first { border-left: 1px solid #e6e6e6; }
.wide { width: 621px; display: flex; align-items: center; padding-left: 10px; font-size: 21px; font-style: italic; color: #222; white-space: nowrap; }
.wide svg { flex: none; }
.wide span { margin: 2px 0 0 10px; display: inline-block; transform: scaleX(.953); transform-origin: 0 50%; }
.col-b { width: 466px; }
.col-c { width: 155px; }
.col-d { width: 129px; }
.col-e { width: 495px; }
.col-g { width: 195px; }
</style>

<style>
body { margin: 0; }
</style>
